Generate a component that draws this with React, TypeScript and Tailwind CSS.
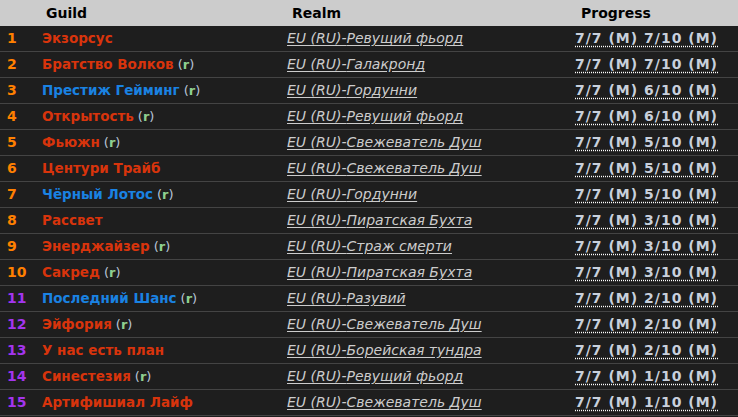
import React from "react";

type Row = {
  rank: number;
  name: string;
  faction: "h" | "a";
  r?: boolean;
  realm: string;
  progress: string;
};

const rows: Row[] = [
  { rank: 1, name: "Экзорсус", faction: "h", realm: "Ревущий фьорд", progress: "7/7 (M) 7/10 (M)" },
  { rank: 2, name: "Братство Волков", faction: "h", r: true, realm: "Галакронд", progress: "7/7 (M) 7/10 (M)" },
  { rank: 3, name: "Престиж Гейминг", faction: "a", r: true, realm: "Гордунни", progress: "7/7 (M) 6/10 (M)" },
  { rank: 4, name: "Открытость", faction: "h", r: true, realm: "Ревущий фьорд", progress: "7/7 (M) 6/10 (M)" },
  { rank: 5, name: "Фьюжн", faction: "h", r: true, realm: "Свежеватель Душ", progress: "7/7 (M) 5/10 (M)" },
  { rank: 6, name: "Центури Трайб", faction: "h", realm: "Свежеватель Душ", progress: "7/7 (M) 5/10 (M)" },
  { rank: 7, name: "Чёрный Лотос", faction: "a", r: true, realm: "Гордунни", progress: "7/7 (M) 5/10 (M)" },
  { rank: 8, name: "Рассвет", faction: "h", realm: "Пиратская Бухта", progress: "7/7 (M) 3/10 (M)" },
  { rank: 9, name: "Энерджайзер", faction: "h", r: true, realm: "Страж смерти", progress: "7/7 (M) 3/10 (M)" },
  { rank: 10, name: "Сакред", faction: "h", r: true, realm: "Пиратская Бухта", progress: "7/7 (M) 3/10 (M)" },
  { rank: 11, name: "Последний Шанс", faction: "a", r: true, realm: "Разувий", progress: "7/7 (M) 2/10 (M)" },
  { rank: 12, name: "Эйфория", faction: "h", r: true, realm: "Свежеватель Душ", progress: "7/7 (M) 2/10 (M)" },
  { rank: 13, name: "У нас есть план", faction: "h", realm: "Борейская тундра", progress: "7/7 (M) 2/10 (M)" },
  { rank: 14, name: "Синестезия", faction: "h", r: true, realm: "Ревущий фьорд", progress: "7/7 (M) 1/10 (M)" },
  { rank: 15, name: "Артифишиал Лайф", faction: "h", realm: "Свежеватель Душ", progress: "7/7 (M) 1/10 (M)" },
];

export default function App() {
  return (
    <div
      className="w-[738px] h-[417px] overflow-hidden bg-[#1e1e1e] text-[14px]"
      style={{ fontFamily: "Verdana, 'DejaVu Sans', sans-serif" }}
    >
      {/* Header */}
      <div className="flex h-[26px] items-center bg-[#cccccc] font-bold text-black">
        <div className="w-[46px] shrink-0" />
        <div className="w-[246px] shrink-0">Guild</div>
        <div className="w-[289px] shrink-0">Realm</div>
        <div>Progress</div>
      </div>

      {rows.map((row) => (
        <div key={row.rank} className="flex h-[26px] items-center border-b border-[#444444]">
          <div
            className={`w-[42px] shrink-0 pl-[7px] font-bold ${
              row.rank > 10 ? "text-[#a335ee]" : "text-[#ff8000]"
            }`}
          >
            {row.rank}
          </div>
          <div className="w-[245px] shrink-0 whitespace-nowrap">
            <span
              className={`text-[13.5px] font-bold ${
                row.faction === "h" ? "text-[#d8340c]" : "text-[#1a82e2]"
              }`}
            >
              {row.name}
            </span>
            {row.r && (
              <span className="ml-[4px] text-[13px] text-[#b8c4d8]">
                (<span className="font-bold text-[#8fcf8f]">r</span>)
              </span>
            )}
          </div>
          <div className="w-[288px] shrink-0 whitespace-nowrap italic text-[#cccccc] underline underline-offset-2">
            EU (RU)-{row.realm}
          </div>
          <div className="whitespace-nowrap font-bold tracking-[1px] text-[#c8d0dc] underline decoration-dotted decoration-white underline-offset-[3px]">
            {row.progress}
          </div>
        </div>
      ))}
    </div>
  );
}
